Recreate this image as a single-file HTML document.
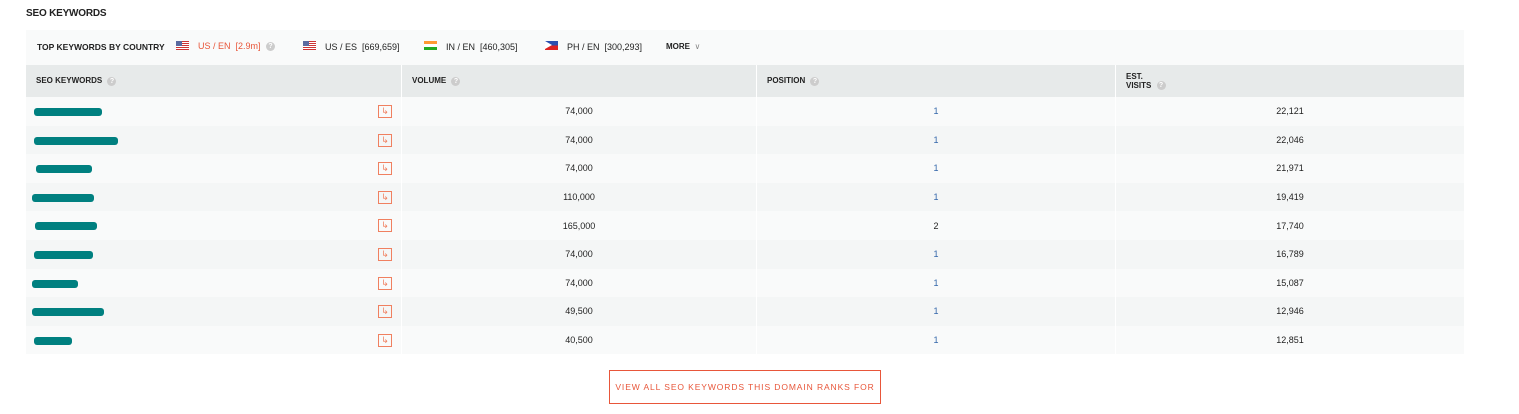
<!DOCTYPE html>
<html><head><style>
body{margin:0;width:1519px;height:414px;background:#fff;font-family:"Liberation Sans",sans-serif;position:relative;overflow:hidden;color:#222}
.t{position:absolute;left:26px;top:8px;font-size:10px;font-weight:bold;letter-spacing:-0.2px}
.bar{position:absolute;left:26px;top:30px;width:1438px;height:35px;background:#f9fafa;font-size:9px}
.bar span{position:absolute;top:12px;white-space:nowrap}
.flag{position:absolute;top:11px;width:13px;height:9px}
.us{background:repeating-linear-gradient(#c33 0 1px,#fff 1px 2px)}
.us:before{content:"";position:absolute;left:0;top:0;width:6px;height:5px;background:#5a6aa0}
.in{background:linear-gradient(#f93 0 33%,#fff 33% 66%,#2a2 66%)}
.ph{background:linear-gradient(#2a4fb0 0 50%,#d22 50%)}
.ph:before{content:"";position:absolute;left:0;top:0;border-left:7px solid #fff;border-top:4.5px solid transparent;border-bottom:4.5px solid transparent}
.q{display:inline-block;width:9px;height:9px;border-radius:50%;background:#ccc;color:#fff;font-size:7px;text-align:center;line-height:9px;vertical-align:middle;margin-left:3px}
table{position:absolute;left:26px;top:65px;width:1438px;border-collapse:collapse;font-size:9px}
th{background:#e7eaea;height:32px;text-align:left;font-size:8px;font-weight:bold;padding:0 0 0 10px;border-left:1px solid #fff;vertical-align:middle}
td{height:28.6px;padding:0;border-left:1px solid #fff;text-align:center;position:relative}
tr:nth-child(even) td{background:#f9fafa}
tr:nth-child(odd) td{background:#f4f6f6}
th:first-child,td:first-child{border-left:none}
.k{position:absolute;top:11px;height:8px;background:#008080;border-radius:3px}
.ic{position:absolute;right:9px;top:8px;width:14px;height:13px;border:1px solid #f08060;box-sizing:border-box;color:#f08060;font-size:9px;line-height:11px;text-align:center;font-style:normal}
.p{color:#3366aa}
.btn{position:absolute;left:609px;top:370px;width:272px;height:34px;border:1px solid #e8563a;box-sizing:border-box;color:#e8563a;font-size:8.5px;letter-spacing:0.9px;text-align:center;line-height:32px;white-space:nowrap}
</style></head><body>
<div class="t">SEO KEYWORDS</div>
<div class="bar">
<span style="left:11px;font-weight:bold;font-size:8.5px">TOP KEYWORDS BY COUNTRY</span>
<i class="flag us" style="left:150px"></i><span style="left:172px;top:11px;color:#e8563a">US / EN &nbsp;[2.9m] <b class="q">?</b></span>
<i class="flag us" style="left:277px"></i><span style="left:299px">US / ES &nbsp;[669,659]</span>
<i class="flag in" style="left:398px"></i><span style="left:420px">IN / EN &nbsp;[460,305]</span>
<i class="flag ph" style="left:519px"></i><span style="left:541px">PH / EN &nbsp;[300,293]</span>
<span style="left:640px;font-weight:bold;font-size:8px">MORE &nbsp;<span style="position:static;color:#888;font-weight:normal">&#8744;</span></span>
</div>
<table>
<tr><th style="width:365px">SEO KEYWORDS <b class="q">?</b></th><th style="width:344px">VOLUME <b class="q">?</b></th><th style="width:348px">POSITION <b class="q">?</b></th><th>EST.<br>VISITS <b class="q">?</b></th></tr>
<tr><td><i class="k" style="left:8px;width:68px"></i><i class="ic">&#8627;</i></td><td>74,000</td><td class="p">1</td><td>22,121</td></tr>
<tr><td><i class="k" style="left:8px;width:84px"></i><i class="ic">&#8627;</i></td><td>74,000</td><td class="p">1</td><td>22,046</td></tr>
<tr><td><i class="k" style="left:10px;width:56px"></i><i class="ic">&#8627;</i></td><td>74,000</td><td class="p">1</td><td>21,971</td></tr>
<tr><td><i class="k" style="left:6px;width:62px"></i><i class="ic">&#8627;</i></td><td>110,000</td><td class="p">1</td><td>19,419</td></tr>
<tr><td><i class="k" style="left:9px;width:62px"></i><i class="ic">&#8627;</i></td><td>165,000</td><td>2</td><td>17,740</td></tr>
<tr><td><i class="k" style="left:8px;width:59px"></i><i class="ic">&#8627;</i></td><td>74,000</td><td class="p">1</td><td>16,789</td></tr>
<tr><td><i class="k" style="left:6px;width:46px"></i><i class="ic">&#8627;</i></td><td>74,000</td><td class="p">1</td><td>15,087</td></tr>
<tr><td><i class="k" style="left:6px;width:72px"></i><i class="ic">&#8627;</i></td><td>49,500</td><td class="p">1</td><td>12,946</td></tr>
<tr><td><i class="k" style="left:8px;width:38px"></i><i class="ic">&#8627;</i></td><td>40,500</td><td class="p">1</td><td>12,851</td></tr>
</table>
<div class="btn">VIEW ALL SEO KEYWORDS THIS DOMAIN RANKS FOR</div>
</body></html>
